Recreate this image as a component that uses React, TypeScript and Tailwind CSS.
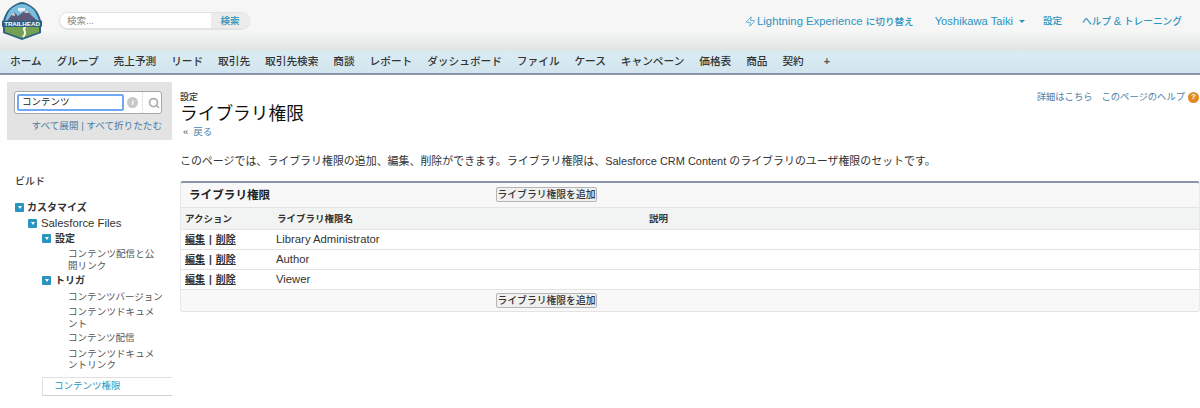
import { Search, Zap } from 'lucide-react';

const tabs = ['ホーム', 'グループ', '売上予測', 'リード', '取引先', '取引先検索', '商談', 'レポート', 'ダッシュボード', 'ファイル', 'ケース', 'キャンペーン', '価格表', '商品', '契約'];
const rows = ['Library Administrator', 'Author', 'Viewer'];

function Logo() {
  return (
    <svg width="42" height="40" viewBox="0 0 42 40" className="shrink-0">
      <path d="M21 2 C25 2 31 6 34 9 C37 12 39 17 40 21 L40 33 L21 40 L2 33 L2 21 C3 17 5 12 8 9 C11 6 17 2 21 2 Z" fill="#2f6283" />
      <path d="M21 4 C25 4 30 7 33 10 C35 13 37 17 38 21 L4 21 C5 17 7 13 9 10 C12 7 17 4 21 4 Z" fill="#79bfdd" />
      <path d="M6 21 L13 12 L17 16 L21 13 L26 10 L31 16 L37 21 Z" fill="#5c5a78" />
      <path d="M13 12 L10.500 15 L14 16 Z M26 10 L23 12.500 L28 13 Z" fill="#e9d9e0" />
      <path d="M17 8 h7 v3 h-3 l-2 2 v-2 h-2 Z" fill="#e3f2f8" />
      <path d="M4 27 H38 V32 L21 38 L4 32 Z" fill="#74a052" />
      <path d="M25 27 C19 29 28 31 22 37" stroke="#f4f7f2" strokeWidth="2" fill="none" />
      <rect x="1" y="20.500" width="40" height="6.500" rx="1" fill="#2a5f80" />
      <text x="21" y="26" textAnchor="middle" fontSize="6.200" fontWeight="700" fill="#fff" fontFamily="Liberation Sans, sans-serif">TRAILHEAD</text>
    </svg>
  );
}

function Toggle() {
  return (
    <span className="flex h-[9px] w-[9px] shrink-0 items-center justify-center rounded-[1px] bg-[#2a94c0]">
      <span className="h-0 w-0 border-x-[2.500px] border-t-[3px] border-x-transparent border-t-white" />
    </span>
  );
}

function AddButton() {
  return (
    <button type="button" className="h-[15px] w-[101px] whitespace-nowrap rounded-[2px] border border-[#b5b5b5] bg-[#f0f0f0] px-0 text-[9.800px] font-medium leading-[13px] text-[#333]">
      ライブラリ権限を追加
    </button>
  );
}

function Sidebar() {
  return (
    <aside className="w-[172px] shrink-0 pl-[7px] pt-[7px]">
      <div className="h-[58px] bg-[#e3e3e3] pt-[9px]">
        <div className="mx-[7px] flex h-[23px] w-[148px] items-center rounded-[3px] border border-[#a8a8a8] bg-white pl-[2px]">
          <div className="flex h-[17px] w-[107px] items-center rounded-[2px] border-2 border-[#6fa8f5] pl-[3px] text-[9.500px] text-[#222]">コンテンツ</div>
          <span className="ml-[3px] flex h-[11px] w-[11px] items-center justify-center rounded-full bg-[#c8c8c8] text-[8px] font-bold italic leading-none text-white">i</span>
          <span className="ml-[4px] h-full border-l border-dotted border-[#ccc]" />
          <Search size={12} strokeWidth={3.500} className="ml-[5px] text-[#b0b0b0]" />
        </div>
        <p className="mt-[5px] pr-[10px] text-right text-[9.600px] leading-[14px] text-[#4a7ea8]">すべて展開 | すべて折りたたむ</p>
      </div>
      <p className="mt-[35px] pl-[8px] text-[10px] font-medium leading-[14px] text-[#333]">ビルド</p>
      <div className="mt-[13px] text-[9.500px] leading-[11.500px] text-[#555]">
        <div className="flex items-center gap-[3px] pl-[8px] text-[10px] font-bold text-[#333]"><Toggle />カスタマイズ</div>
        <div className="mt-[4px] flex items-center gap-[4px] pl-[21px] text-[11.300px] font-medium leading-[11px] text-[#333]"><Toggle />Salesforce Files</div>
        <div className="mt-[4px] flex items-center gap-[4px] pl-[35px] text-[10px] font-bold text-[#333]"><Toggle />設定</div>
        <p className="mt-[4px] box-content w-[95px] pl-[61px] tracking-[0.100px]">コンテンツ配信と公開リンク</p>
        <div className="mt-[4px] flex items-center gap-[4px] pl-[35px] text-[10px] font-bold text-[#333]"><Toggle />トリガ</div>
        <p className="mt-[4px] whitespace-nowrap pl-[61px]">コンテンツバージョン</p>
        <p className="mt-[4px] box-content w-[95px] pl-[61px] tracking-[0.100px]">コンテンツドキュメント</p>
        <p className="mt-[3px] pl-[61px]">コンテンツ配信</p>
        <p className="mt-[4px] box-content w-[95px] pl-[61px] tracking-[0.100px]">コンテンツドキュメントリンク</p>
        <div className="ml-[35px] mt-[6px] flex h-[19px] items-center border-y border-l border-[#e0e0e0] border-b-[#cfcfcf] pl-[11px] text-[#2a94c0]">コンテンツ権限</div>
      </div>
    </aside>
  );
}

export default function App() {
  return (
    <div className="h-[408px] w-[1200px] overflow-hidden bg-white font-['Liberation_Sans','Noto_Sans_CJK_JP',sans-serif] text-[10px]">
      <header className="flex h-[51px] bg-gradient-to-b from-[#f6f6f6] from-60% to-[#e0e3e3] pl-[1px]">
        <div><Logo /></div>
        <div className="ml-[16px] mt-[12px] flex h-[17px] w-[191px] overflow-hidden rounded-full border border-[#e2e2e2] bg-white shadow-[0_1px_1px_rgba(0,0,0,0.08)]">
          <span className="flex-1 pl-[7px] text-[9.500px] leading-[15px] text-[#8a8a8a]">検索...</span>
          <span className="w-[38px] bg-[#ececec] text-center text-[9.500px] font-bold leading-[15px] text-[#3d9cbd]">検索</span>
        </div>
        <nav className="ml-auto flex h-[42px] items-center pr-[18px] font-medium text-[#2a94c0]">
          <Zap size={11} strokeWidth={1.500} className="mr-[1px]" />
          <span className="text-[11.300px]">Lightning Experience <span className="text-[9.600px]">に切り替え</span></span>
          <span className="ml-[21px] text-[11.200px]">Yoshikawa Taiki</span>
          <span className="ml-[6px] h-0 w-0 border-x-[3px] border-t-[3px] border-x-transparent border-t-[#2a94c0]" />
          <span className="ml-[18px] text-[9.500px]">設定</span>
          <span className="ml-[20px] text-[9.700px]">ヘルプ <span className="text-[11px]">&amp;</span> トレーニング</span>
        </nav>
      </header>

      <div className="flex h-[24px] items-center gap-[14.850px] border-b-2 border-b-[#8a95ad] bg-gradient-to-b from-[#daecf3] to-[#d2e5ee] pb-[1px] pl-[10px] text-[10.700px] font-medium text-[#333]">
        {tabs.map((tab) => <span key={tab} className="whitespace-nowrap">{tab}</span>)}
        <span className="ml-[5px] font-bold text-[#555]">+</span>
      </div>

      <div className="flex">
        <Sidebar />
        <main className="min-w-0 flex-1 pl-[8px] pt-[16px]">
          <div className="flex justify-between">
            <div>
              <p className="text-[9px] font-medium leading-[12px] text-[#333]">設定</p>
              <h1 className="text-[17.700px] leading-[22px] text-[#111]">ライブラリ権限</h1>
              <p className="text-[9.500px] leading-[13px] text-[#4a7ea8]"><span className="ml-[3px] mr-[5px] text-[#555]">«</span>戻る</p>
            </div>
            <div className="flex items-start gap-[9px] pr-[1px] text-[9.300px] leading-[12px] text-[#4a7ea8]">
              <span>詳細はこちら</span>
              <span className="flex items-center gap-[3px]">このページのヘルプ
                <span className="flex h-[11px] w-[11px] items-center justify-center rounded-full bg-[#e28b1e] text-[8px] font-bold text-white">?</span>
              </span>
            </div>
          </div>
          <p className="mt-[16px] whitespace-nowrap text-[10.950px] leading-[14px] text-[#333]">このページでは、ライブラリ権限の追加、編集、削除ができます。ライブラリ権限は、Salesforce CRM Content のライブラリのユーザ権限のセットです。</p>

          <section className="mt-[13px] rounded-[3px] border-x border-b border-t-2 border-x-[#eaeaea] border-b-[#e3e3e3] border-t-[#8a95ad] bg-[#f8f8f8]">
            <div className="flex h-[24px] items-center pb-[1px] pl-[8px]">
              <h2 className="w-[307px] text-[11.600px] font-bold text-[#222]">ライブラリ権限</h2>
              <AddButton />
            </div>
            <div className="flex h-[23px] items-center border-y border-[#e3e3e3] bg-[#f2f3f3] pl-[4px] pt-[1px] text-[9.500px] font-bold text-[#333]">
              <span className="w-[92px]">アクション</span>
              <span className="w-[372px]">ライブラリ権限名</span>
              <span>説明</span>
            </div>
            {rows.map((row) => (
              <div key={row} className="flex h-[20px] items-center border-b border-[#e3e3e3] bg-white pl-[4px] text-[10px] text-[#333]">
                <span className="w-[91px] font-bold"><u>編集</u><span className="mx-[4px]">|</span><u>削除</u></span>
                <span className="text-[11.300px]">{row}</span>
              </div>
            ))}
            <div className="flex h-[21px] items-center pl-[315px]"><AddButton /></div>
          </section>
        </main>
      </div>
    </div>
  );
}
